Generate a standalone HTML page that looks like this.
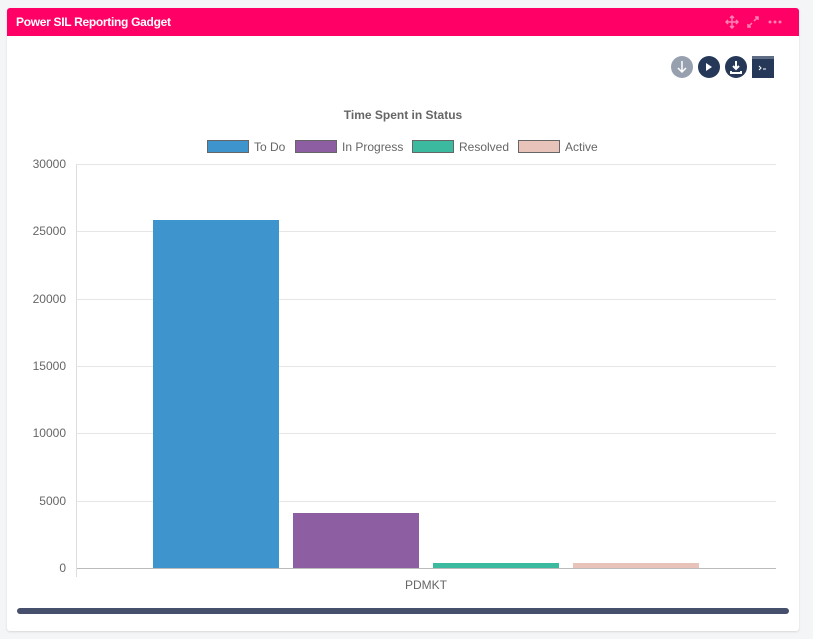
<!DOCTYPE html><html><head><style>
body{margin:0;background:#f4f5f7;width:813px;height:639px;font-family:"Liberation Sans",sans-serif;position:relative;overflow:hidden}
.card{position:absolute;left:7px;top:8px;width:792px;height:623px;background:#fff;border-radius:3px;box-shadow:0 1px 2px rgba(0,0,0,.12)}
.hdr{position:absolute;left:7px;top:8px;width:792px;height:28px;background:#ff0066;border-radius:3px 3px 0 0;color:#fff;font-weight:bold;font-size:12px;line-height:28px}
.hdr span{position:absolute;left:9px;letter-spacing:-.3px}
.a{position:absolute}
.lbl{position:absolute;font-size:12px;color:#666;text-align:right;width:50px;left:16px}
.grid{position:absolute;left:76px;width:700px;height:1px;background:#e6e6e6}
.lg{position:absolute;top:140px;height:13px;border:1px solid #666;box-sizing:border-box;width:42px}
.lt{position:absolute;top:140px;font-size:12px;color:#666}
</style></head><body>
<div class="card"></div>
<div class="hdr"><span>Power SIL Reporting Gadget</span>
<svg class="a" style="left:718px;top:7px" width="60" height="14"><g stroke="#ff80b3" stroke-width="1.5" fill="none"><path d="M7 1v12M1 7h12M5 3l2-2 2 2M5 11l2 2 2-2M3 5l-2 2 2 2M11 5l2 2-2 2"/><path d="M23 12l4-4M29 6l4-4M30 2h3v3M23 9v3h3"/></g><g fill="#ff80b3"><circle cx="45" cy="7" r="1.5"/><circle cx="50" cy="7" r="1.5"/><circle cx="55" cy="7" r="1.5"/></g></svg></div>
<svg class="a" style="left:670px;top:55px" width="106" height="24">
<circle cx="12" cy="12" r="11" fill="#97a0af"/><path d="M12 6v11M8 13l4 4 4-4" stroke="#fff" stroke-width="1.5" fill="none"/>
<circle cx="39" cy="12" r="11" fill="#253858"/><path d="M36 8v8l6-4z" fill="#fff"/>
<circle cx="66" cy="12" r="11" fill="#253858"/><path d="M66 6v8M63 11l3 3 3-3M61 16v2h10v-2" stroke="#fff" stroke-width="2" fill="none"/>
<rect x="82" y="1" width="22" height="22" fill="#253858"/><rect x="82" y="1" width="22" height="3" fill="#5e6c84"/><path d="M89 11l2 2-2 2M93 14h3" stroke="#fff" stroke-width="1" fill="none"/>
</svg>
<div class="a" style="left:0;width:806px;top:108px;text-align:center;font-size:12px;font-weight:bold;color:#666">Time Spent in Status</div>
<div class="lg" style="left:207px;background:#3e95cd"></div><div class="lt" style="left:254px">To Do</div>
<div class="lg" style="left:295px;background:#8e5ea2"></div><div class="lt" style="left:342px">In Progress</div>
<div class="lg" style="left:412px;background:#3cba9f"></div><div class="lt" style="left:459px">Resolved</div>
<div class="lg" style="left:518px;background:#e8c3b9"></div><div class="lt" style="left:565px">Active</div>
<div class="grid" style="top:164px"></div><div class="grid" style="top:231px"></div><div class="grid" style="top:299px"></div><div class="grid" style="top:366px"></div><div class="grid" style="top:433px"></div><div class="grid" style="top:501px"></div><div class="grid" style="top:568px;background:#bbb"></div>
<div class="a" style="left:76px;top:164px;width:1px;height:413px;background:#ddd"></div>
<div class="lbl" style="top:157px">30000</div><div class="lbl" style="top:224px">25000</div><div class="lbl" style="top:292px">20000</div><div class="lbl" style="top:359px">15000</div><div class="lbl" style="top:426px">10000</div><div class="lbl" style="top:494px">5000</div><div class="lbl" style="top:561px">0</div>
<div class="a" style="left:153px;top:220px;width:126px;height:348px;background:#3e95cd"></div>
<div class="a" style="left:293px;top:513px;width:126px;height:55px;background:#8e5ea2"></div>
<div class="a" style="left:433px;top:563px;width:126px;height:5px;background:#3cba9f"></div>
<div class="a" style="left:573px;top:563px;width:126px;height:5px;background:#e8c3b9"></div>
<div class="a" style="left:405px;top:578px;font-size:12px;color:#666">PDMKT</div>
<div class="a" style="left:17px;top:608px;width:772px;height:6px;border-radius:3px;background:#464f6b"></div>
</body></html>
